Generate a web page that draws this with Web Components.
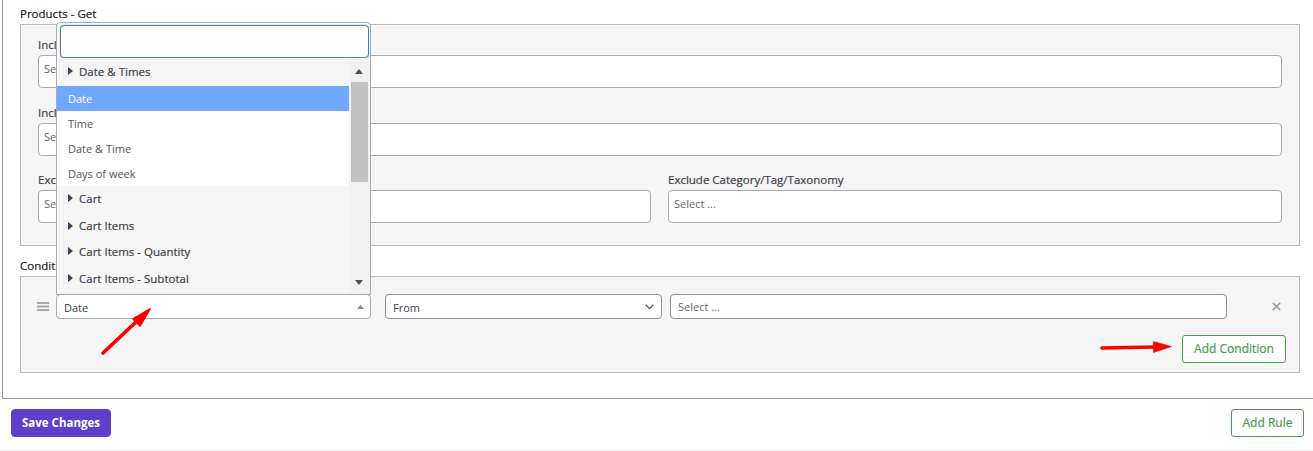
<!DOCTYPE html>
<html><head><meta charset="utf-8"><title>Rule</title>
<style>
html,body{margin:0;padding:0;background:#fff;overflow:hidden}
body{font:11px "Open Sans",sans-serif;color:#3c434a;width:1313px;height:451px}
</style></head><body>
<template id="t-input"><style>
:host{display:block;box-sizing:border-box;background:#fff;border:1px solid #aaa;border-radius:4px;height:33px;padding:5px 5px;font-size:11px;color:#666;line-height:16px}
</style><slot></slot></template>

<template id="t-field"><style>
:host{display:block;min-width:0}
.l{font-size:11.5px;font-weight:500;-webkit-text-stroke:.2px currentColor;line-height:15px;height:15px;margin-bottom:3px;color:#3c434a}
</style><div class="l"><slot name="label"></slot></div><slot></slot></template>

<template id="t-panel"><style>
:host{display:block;margin-left:17px;width:1280px}
.t{font-weight:500;-webkit-text-stroke:.2px currentColor;font-size:11.5px;line-height:15px;height:15px;color:#222;margin-bottom:3px}
.b{box-sizing:border-box;background:#f5f5f5;border:1px solid #bbb;width:100%}
</style><div class="t"><slot name="title"></slot></div><div class="b" part="b"><slot></slot></div></template>

<template id="t-btn"><style>
:host{display:inline-flex;box-sizing:border-box;align-items:center;justify-content:center;height:28px;background:#fff;color:#439a48;border:1px solid #46a046;border-radius:3px;font-size:12px;font-weight:500;-webkit-text-stroke:.2px currentColor;white-space:nowrap;padding-bottom:1px}
:host([primary]){background:#5e3fcb;border-color:#5e3fcb;color:#fff;font-weight:700;border-radius:4px;font-size:11.5px;-webkit-text-stroke:0}
</style><slot></slot></template>

<template id="t-select"><style>
:host{display:flex;align-items:center;box-sizing:border-box;height:25px;background:#fff;border:1px solid #8f8f9d;border-radius:4px;padding:0 7px;font-size:11px;color:#3c434a;position:relative}
span{flex:1;padding-top:2px}
svg{display:block;flex:none}
</style><span><slot></slot></span><slot name="icon"></slot></template>

<template id="t-options"><style>
:host{position:absolute;left:56px;top:22px;width:315px;height:273px;box-sizing:border-box;background:#fff;border:1px solid #aaa;border-radius:4px 4px 0 0;display:block;font-size:11px;color:#444;z-index:5;overflow:hidden}
.s{box-sizing:border-box;margin:2px 1px 0 3px;height:33px;border:1px solid #4f86b3;border-radius:4px;box-shadow:0 0 1.5px #4f86b3;background:#fff}
.wrap{display:flex;height:236px}
.list{width:292px;flex:none}
.g,.o{display:flex;align-items:center;box-sizing:border-box;padding-left:11px}
.g{background:#f5f5f5;font-weight:500;-webkit-text-stroke:.2px currentColor;font-size:11.5px;gap:6px;color:#3c434a;padding-bottom:2px}
.o{height:25px;font-weight:400;color:#555}
.o.on{background:#70a7ff;color:#fff}
.g i{width:0;height:0;border-left:5px solid #3c434a;border-top:4px solid transparent;border-bottom:4px solid transparent}
.bar{width:21px;background:#f1f1f1;position:relative}
.thumb{position:absolute;left:2px;right:2px;top:24px;height:100px;background:#c1c1c1}
.up,.dn{position:absolute;left:6px;width:0;height:0;border-left:4.5px solid transparent;border-right:4.5px solid transparent}
.up{top:11px;border-bottom:5px solid #505050}
.dn{bottom:9px;border-top:5px solid #505050}
</style>
<div class="s"></div>
<div class="wrap"><div class="list">
<div class="g" style="height:28px"><i></i>Date &amp; Times</div>
<div class="o on">Date</div><div class="o">Time</div><div class="o">Date &amp; Time</div><div class="o">Days of week</div>
<div class="g" style="height:26px"><i></i>Cart</div>
<div class="g" style="height:27px;padding-bottom:0"><i></i>Cart Items</div>
<div class="g" style="height:26px"><i></i>Cart Items - Quantity</div>
<div class="g" style="height:30px;padding-bottom:4px"><i></i>Cart Items - Subtotal</div>
</div><div class="bar"><div class="up"></div><div class="thumb"></div><div class="dn"></div></div></div>
</template>

<script>
function reg(name,tpl){customElements.define(name,class extends HTMLElement{constructor(){super();this.attachShadow({mode:'open'}).appendChild(document.getElementById(tpl).content.cloneNode(true));}});}
reg('ui-input','t-input');reg('ui-field','t-field');reg('ui-panel','t-panel');reg('ui-btn','t-btn');reg('ui-select','t-select');reg('ui-options','t-options');
customElements.define('ui-page',class extends HTMLElement{constructor(){super();this.attachShadow({mode:'open'}).innerHTML=`<style>
:host{display:block;width:1313px;height:451px;position:relative;box-sizing:border-box}
.rule{box-sizing:border-box;height:399px;margin-left:2px;border-left:1px solid #999;border-bottom:1px solid #999;padding-top:6px}
.foot{display:flex;justify-content:space-between;padding:10px 9px 0 11px;box-sizing:border-box;height:52px;border-bottom:1px solid #eee;align-items:flex-start}
svg.ov{position:absolute;left:0;top:0;pointer-events:none;z-index:6}
</style><div class="rule"><slot name="rule"></slot></div><div class="foot"><slot name="foot"></slot></div><slot name="ov"></slot>
<svg class="ov" width="1313" height="451"><g fill="#f00" stroke="#f00" stroke-linejoin="round">
<path d="M103 353 L136 322" stroke-width="3.6" stroke-linecap="round" fill="none"/>
<path d="M133 319 L150 309 L140 326 Z" stroke-width="1.6"/>
<path d="M1102 348 L1155 347" stroke-width="3.6" stroke-linecap="round" fill="none"/>
<path d="M1153.5 341.5 L1171.5 346.5 L1153.5 352.5 Z" stroke-width=".6"/>
</g></svg>`;}});
customElements.define('ui-hamburger',class extends HTMLElement{constructor(){super();this.attachShadow({mode:'open'}).innerHTML=`<style>:host{display:block;width:12px;height:9px}svg{display:block}</style><svg width="12" height="9"><rect width="12" height="2" y="0" fill="#aaa"/><rect width="12" height="2" y="3.5" fill="#aaa"/><rect width="12" height="2" y="7" fill="#aaa"/></svg>`;}});
customElements.define('ui-x',class extends HTMLElement{constructor(){super();this.attachShadow({mode:'open'}).innerHTML=`<style>:host{display:block;width:9px;height:9px}svg{display:block}</style><svg width="9" height="9"><path d="M.8.8l7.4 7.4M8.2.8L.8 8.2" stroke="#9aa5a8" stroke-width="1.8"/></svg>`;}});
</script>

<ui-page>
<div slot="rule">
<ui-panel><span slot="title">Products - Get</span>
<div style="padding:12px 16px 22px 17px;display:grid;grid-template-columns:613px 614px;column-gap:17px;row-gap:16.5px">
<ui-field style="grid-column:1/3"><span slot="label">Include Products</span><ui-input>Select ...</ui-input></ui-field>
<ui-field style="grid-column:1/3"><span slot="label">Include Category/Tag/Taxonomy</span><ui-input>Select ...</ui-input></ui-field>
<ui-field><span slot="label">Exclude Products</span><ui-input>Select ...</ui-input></ui-field>
<ui-field><span slot="label">Exclude Category/Tag/Taxonomy</span><ui-input>Select ...</ui-input></ui-field>
</div></ui-panel>
<ui-panel style="margin-top:12px"><span slot="title">Conditions</span>
<div style="padding:17px 13px 9px 16px">
<div style="display:flex;align-items:center">
<ui-hamburger style="margin-right:7px"></ui-hamburger>
<ui-select style="width:315px;margin-right:14px;border-color:#aaa">Date<svg slot="icon" width="7" height="4" style="margin-right:-1px"><path d="M3.5 0L7 4H0Z" fill="#888"/></svg></ui-select>
<ui-select style="width:277px;margin-right:8px">From<svg slot="icon" width="9" height="6"><path d="M.7 .8l3.8 3.8 3.8-3.8" fill="none" stroke="#555" stroke-width="1.3"/></svg></ui-select>
<ui-select style="width:557px;margin-right:45px"><span style="color:#666;position:relative;top:-1px">Select ...</span></ui-select>
<ui-x></ui-x>
</div>
<div style="display:flex;justify-content:flex-end;margin-top:16px"><ui-btn style="width:104px">Add Condition</ui-btn></div>
</div></ui-panel>
</div>
<ui-btn slot="foot" primary style="width:100px">Save Changes</ui-btn>
<ui-btn slot="foot" style="width:73px">Add Rule</ui-btn>
<ui-options slot="ov"></ui-options>
</ui-page>
</body></html>
